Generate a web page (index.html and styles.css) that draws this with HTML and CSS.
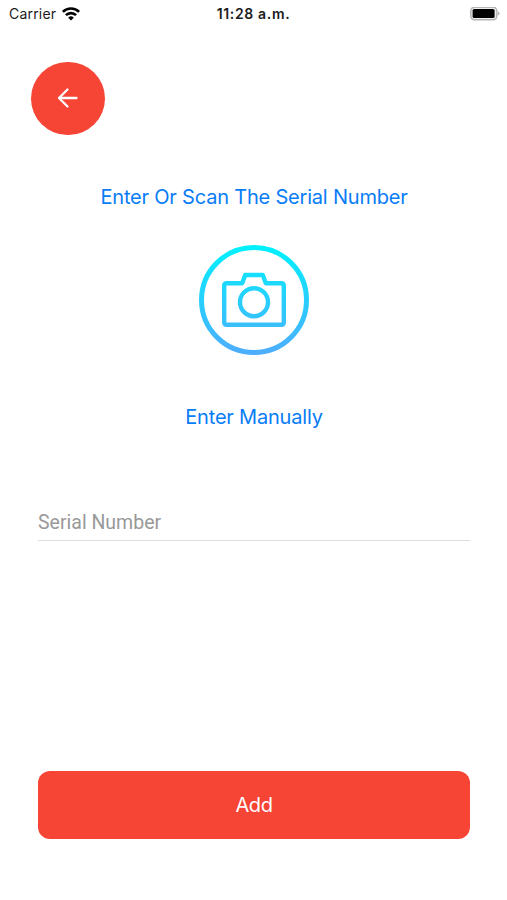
FILE: index.html
```html
<!DOCTYPE html>
<html lang="en">
<head>
<meta charset="utf-8">
<title>Serial Number</title>
<link rel="stylesheet" href="styles.css">
</head>
<body>
<header class="status">
  <div class="carrier"><span class="carrier-name">Carrier</span>
    <svg width="18" height="14" viewBox="0 0 18 14"><g fill="none" stroke="#000" stroke-width="2.6"><path d="M.9 4.9a11.5 11.5 0 0 1 16.2 0"/><path d="M3.9 8.2a7.2 7.2 0 0 1 10.2 0"/></g><path d="M9 13.6 6.2 10.7a4 4 0 0 1 5.6 0z"/></svg>
  </div>
  <span class="time">11:28 a.m.</span>
  <svg class="battery" width="31" height="14" viewBox="0 0 31 14"><rect x="1.8" y=".3" width="26" height="12.4" rx="3.6" fill="#eee" stroke="#b5b5b5" stroke-width="1.5"/><rect x="3.6" y="2" width="22" height="9" rx="1.6"/><path d="M28.8 4.3q1.8.7 1.8 2.2t-1.8 2.2z" fill="#b5b5b5"/></svg>
</header>
<main>
  <button class="back" aria-label="Back"><svg width="22" height="22" viewBox="0 0 22 22" fill="none" stroke="#fff" stroke-width="2.3" stroke-linecap="round" stroke-linejoin="round"><path d="M19.5 11H2M10.5 2.5 2 11l8.500 8.500"/></svg></button>
  <h1 class="title"><span>Enter Or Scan The Serial Number</span></h1>
  <svg class="camera" width="112" height="112" viewBox="0 0 112 112" fill="none" stroke="url(#sky)"><defs><linearGradient id="sky" gradientUnits="userSpaceOnUse" x1="0" y1="0" x2="0" y2="112"><stop stop-color="#00f2fe"/><stop offset="1" stop-color="#4facfe"/></linearGradient></defs><circle cx="56" cy="56" r="52.5" stroke-width="5"/><path stroke-width="4.4" stroke-linejoin="round" d="M28.7 39.2H44.2L47.2 31H64.8L67.8 39.2H83.3q2.5 0 2.5 2.5V78.3q0 2.5-2.5 2.5H28.7q-2.5 0-2.5-2.5V41.7q0-2.5 2.500-2.500z"/><circle cx="56" cy="58.2" r="14" stroke-width="4.4"/></svg>
  <h2 class="manual"><span>Enter Manually</span></h2>
  <div class="field"><span>Serial Number</span></div>
  <button class="add"><span>Add</span></button>
</main>
</body>
</html>
```
FILE: styles.css
```css
* { box-sizing: border-box; }
body { margin: 0; width: 507px; height: 900px; background: #fff; font-family: Inter, sans-serif; overflow: hidden; }
svg { display: block; }
.status { height: 28px; display: grid; grid-template-columns: 1fr auto 1fr; align-items: center; padding: 0 7px 0 9px; font-size: 14px; line-height: 20px; color: #1b1b1b; }
.carrier { display: flex; align-items: center; gap: 6px; padding-bottom: 1px; }
.carrier-name { letter-spacing: .2px; }
.time { font-weight: 600; letter-spacing: .65px; margin-left: -2px; }
.battery { justify-self: end; }
main { display: flex; flex-direction: column; padding: 0 37px 0 38px; }
button { border: 0; padding: 0; font-family: inherit; color: #fff; background: #f64435; }
.back { width: 73.500px; height: 73.500px; border-radius: 50%; margin: 33.700px 0 0 -6.700px; display: flex; align-items: center; justify-content: center; }
.title, .manual { margin: 0; text-align: center; font-weight: 400; color: #087df7; font-size: 20px; line-height: 30px; letter-spacing: -.2px; }
.title { margin-top: 46.800px; }
.camera { align-self: center; margin-top: 32px; }
.manual { margin-top: 46px; }
.field { margin-top: 72px; height: 37px; border-bottom: 1px solid #ddd; color: #999; font-family: Roboto, sans-serif; font-size: 19.5px; line-height: 37px; }
.add { margin-top: 230px; height: 68px; border-radius: 12px; font-size: 20px; letter-spacing: -.4px; }
```
